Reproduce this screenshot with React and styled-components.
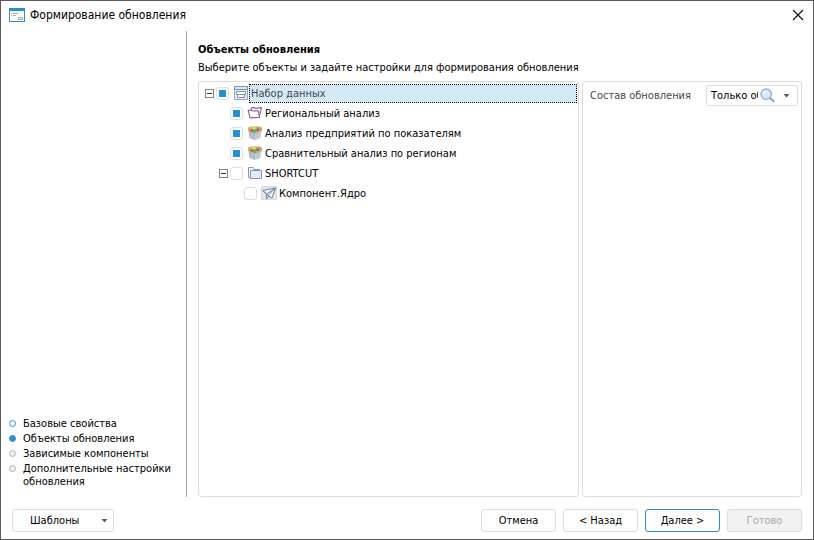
import React, { useState } from 'react'
import styled, { createGlobalStyle } from 'styled-components'


const GlobalStyle = createGlobalStyle`
*, *::before, *::after {
    box-sizing: border-box;
}

body {
    margin: 0;
    background: #fff;
    color: #000;
    font: 11px/13px "DejaVu Sans Condensed", "DejaVu Sans", sans-serif;
}

button, select {
    font: inherit;
    color: inherit;
}
`;

const Window = styled.div`
display: flex;
flex-direction: column;
min-height: 100vh;
border: 1px solid #5a5a5c;
background: #fff;
`

const TitleBar = styled.header`
display: flex;
align-items: center;
gap: 5px;
height: 30px;
padding: 0 7px 2px 8px;
`

const WindowTitle = styled.h1`
flex: 1;
margin: 0;
font-size: 12px;
font-weight: normal;
line-height: 16px;
`

const CloseButton = styled.button`
display: flex;
padding: 2px;
border: none;
background: none;
cursor: pointer;
`

const Body = styled.div`
display: flex;
flex: 1;
`

const Sidebar = styled.nav`
display: flex;
flex-direction: column;
justify-content: flex-end;
width: 186px;
padding: 0 10px 9px 8px;
border-right: 1px solid #a0a0a0;
`

const Steps = styled.ol`
display: flex;
flex-direction: column;
gap: 2px;
margin: 0;
padding: 0;
list-style: none;
`

const stepColors = {
    done: ['#2b90cd', '#fff'],
    current: ['#2b90cd', '#2b90cd'],
    pending: ['#b4b4b4', '#eee'],
}

const Step = styled.li`
display: flex;
gap: 7px;

&::before {
    content: "";
    flex: none;
    width: 7px;
    height: 7px;
    margin-top: 3px;
    border: 1px solid ${({ $state }) => stepColors[$state][0]};
    border-radius: 50%;
    background: ${({ $state }) => stepColors[$state][1]};
}
`

const Content = styled.main`
display: flex;
flex: 1;
flex-direction: column;
min-width: 0;
padding: 11px 11px 0;
`

const Heading = styled.h2`
margin: 0 0 2px;
font-size: 11px;
line-height: 15px;
`

const Hint = styled.p`
margin: 0 0 5px;
line-height: 17px;
`

const Panels = styled.div`
display: flex;
flex: 1;
gap: 3px;
`

const Panel = styled.section`
flex: ${({ $width }) => ($width ? `0 0 ${$width}` : '1')};
min-width: 0;
padding: ${({ $width }) => ($width ? '3px' : '1px')};
border: 1px solid #dcdcdc;
border-radius: 3px;
`

const Tree = styled.ul`
margin: 0;
padding: 0;
list-style: none;
`

const Row = styled.div`
display: flex;
align-items: center;
height: 20px;
padding-left: ${({ $level }) => 5 + $level * 14}px;
`

const Expander = styled.button`
display: flex;
width: 11px;
padding: 0;
border: none;
background: none;
`

const Spacer = styled.span`
width: ${({ $width }) => $width};
`

const CheckFrame = styled.span`
display: flex;
flex: none;
width: 13px;
height: 13px;
margin-right: 4px;
border: 1px solid #dedede;
border-radius: 3px;
`

const CheckBox = styled.input`
appearance: none;
width: 11px;
height: 11px;
margin: 0;
border: 2px solid transparent;

&:checked {
    background: #2490ce padding-box;
}
`

const RowLabel = styled.label`
flex: 1;
height: 19px;
border: 1px dotted ${({ $selected }) => ($selected ? '#000' : 'transparent')};
padding-left: 1px;
line-height: 17px;
background: ${({ $selected }) => ($selected ? '#d5e8f6' : 'transparent')};
color: ${({ $selected }) => ($selected ? '#46484c' : '#000')};
`

const Setting = styled.div`
display: flex;
align-items: center;
justify-content: space-between;
padding-left: 4px;
color: #45484f;
`

const ComboBox = styled.span`
display: flex;
align-items: center;
width: 92px;
height: 21px;
padding: 0 7px 0 4px;
border: 1px solid #dcdcdc;
border-radius: 3px;
color: #000;
`

const Select = styled.select`
appearance: none;
flex: 1;
min-width: 0;
margin-right: 2px;
padding: 0;
border: none;
outline: none;
background: none;
text-overflow: clip;
`

const Footer = styled.footer`
display: flex;
gap: 7px;
padding: 12px 11px 7px;
`

const Button = styled.button`
width: 75px;
height: 23px;
padding: 0;
border: 1px solid ${({ $primary }) => ($primary ? '#2b8fcd' : '#dcdcdc')};
border-radius: 3px;
background: #fff;

&:disabled {
    background: #f2f2f2;
    color: #a9a9ab;
}
`

const MenuButton = styled(Button)`
display: flex;
align-items: center;
justify-content: space-between;
width: 102px;
margin-right: auto;
padding: 0 5px 0 17px;
`

const AppIcon = () => (
    <svg width="16" height="14" viewBox="0 0 16 14" shapeRendering="crispEdges">
        <path d="M0 0h16v14H0z" fill="#2b8fcd" />
        <path d="M1 3h14v10H1z" fill="#fff" />
        <path d="M2 5h1v1H2zM4 5h5v1H4zM2 7h1v1H2zM4 7h3v1H4z" fill="#aaa" />
        <path d="M9.500 9.500h4v2h-4z" fill="none" stroke="#aaa" />
    </svg>
)

const CloseIcon = () => (
    <svg width="12" height="12" viewBox="0 0 12 12" fill="none" stroke="#111" strokeWidth="1.200">
        <path d="M1 1l10 10M11 1L1 11" />
    </svg>
)

const MinusIcon = () => (
    <svg width="9" height="9" viewBox="0 0 9 9" fill="none" shapeRendering="crispEdges">
        <path d="M.5.5h8v8h-8z" stroke="#858585" />
        <path d="M2 4.500h5" stroke="#333" />
    </svg>
)

const ArrowIcon = () => (
    <svg width="7" height="4" viewBox="0 0 7 4">
        <path d="M.5 0h6L3.500 3.500z" fill="#5c5c5c" />
    </svg>
)

const SearchIcon = () => (
    <svg width="15" height="15" viewBox="0 0 15 15" fill="none">
        <path d="M10 10l3.500 3.300" stroke="#8b9fc4" strokeWidth="2" strokeLinecap="round" />
        <circle cx="6.200" cy="6.200" r="5.200" fill="#d6e9fb" stroke="#8eacd3" strokeWidth="1.300" />
        <path d="M3.500 6a3 3 0 0 1 3-2.800" stroke="#fff" strokeWidth="1.200" />
    </svg>
)

const icons = {
    archive: (
        <g stroke="#7e90b0">
            <path d="M1.500 1.500h13v13h-13z" fill="#e6eef7" stroke="#94a4c2" />
            <path d="M1.500 1.500h13v3h-13z" fill="#dce9f5" />
            <path d="M4.500 9.500h7v3h-7z" fill="#fff" />
            <path d="M3.500 6.500h9v3h-9z" fill="#fff" />
        </g>
    ),
    folders: (
        <g fill="#fff" stroke="#8b6596" strokeWidth="1.200" strokeLinejoin="round">
            <path d="M5 9L4.300 3.200 7 2.400l1 .9 6.500-.6-1.800 7.500z" />
            <path d="M1.300 5.300l3-.3.800 1 6.200-.2 1.200 6.700-9.500.3z" />
        </g>
    ),
    cube: (
        <g>
            <path d="M1.200 4L8 6v9l-5.500-2z" fill="#aeb5be" />
            <path d="M14.800 4L8 6v9l5.500-2z" fill="#cdd2d8" />
            <path d="M4.200 7.500v6M6 8v6.200" stroke="#c6ccd3" strokeWidth=".8" />
            <path d="M10 8v6M12 7.500v6" stroke="#b4bbc4" strokeWidth=".8" />
            <path d="M1 2.800l4-1.300h6l4 1.300v3L12 7.500 8 8.500 4 7.500 1 5.800z" fill="#93b9a0" />
            <path d="M1 2.800l3-1 2 1-1.500 2L1 5z" fill="#f0a836" />
            <path d="M5 1.500h4L8.500 4l-3 .2z" fill="#e9dc5c" />
            <path d="M10 1.500h2l3 1.300v2l-3-1z" fill="#ec9a3c" />
            <path d="M3.500 4.500h3v2.300l-3-.6z" fill="#d8432e" />
            <path d="M9.500 3.500h2.500v2.500H9.500z" fill="#da4a36" />
            <path d="M6.800 4.500h2.200V8H6.800z" fill="#5fae78" />
        </g>
    ),
    folder: (
        <g stroke="#8494b4" strokeLinejoin="round">
            <path d="M1.500 12.500v-10h4.500l1 2h5.500v2" fill="#eef4fb" />
            <path d="M1.500 12.500l2 1" />
            <path d="M3.500 5.500h11v8h-11z" fill="#e2ebf6" />
        </g>
    ),
    component: (
        <g>
            <path d="M.5 1.500h15v13H.5z" fill="#e1e8f0" stroke="#d0d8e0" />
            <path d="M1.800 5.500L14.500 3 11 13 7 10.500z" fill="#f9fcff" stroke="#6d83a2" strokeLinejoin="round" />
            <path d="M14.500 3L5.500 9v5L8 11" fill="none" stroke="#6d83a2" strokeLinejoin="round" />
            <path d="M1.800 5.500L5.500 9M14 3.500L7 10.500" fill="none" stroke="#6d83a2" />
        </g>
    ),
}

const NodeIcon = ({ name }) => (
    <svg width="16" height="16" viewBox="0 0 16 16">{icons[name]}</svg>
)

const steps = [
    { title: 'Базовые свойства', state: 'done' },
    { title: 'Объекты обновления', state: 'current' },
    { title: 'Зависимые компоненты', state: 'pending' },
    { title: 'Дополнительные настройки обновления', state: 'pending' },
]

const nodes = [
    { id: 'dataset', title: 'Набор данных', level: 0, icon: 'archive', checked: true, expander: true },
    { id: 'regional', title: 'Региональный анализ', level: 1, icon: 'folders', checked: true },
    { id: 'companies', title: 'Анализ предприятий по показателям', level: 1, icon: 'cube', checked: true },
    { id: 'compare', title: 'Сравнительный анализ по регионам', level: 1, icon: 'cube', checked: true },
    { id: 'shortcut', title: 'SHORTCUT', level: 1, icon: 'folder', checked: false, expander: true },
    { id: 'core', title: 'Компонент.Ядро', level: 2, icon: 'component', checked: false },
]

const TreeNode = ({ node, selected, onSelect }) => (
    <li>
        <Row $level={node.level}>
            {node.expander ? <Expander aria-label="Свернуть"><MinusIcon /></Expander> : <Spacer $width="11px" />}
            <CheckFrame>
                <CheckBox type="checkbox" id={node.id} defaultChecked={node.checked} onFocus={onSelect} />
            </CheckFrame>
            <NodeIcon name={node.icon} />
            <RowLabel htmlFor={node.id} $selected={selected}>{node.title}</RowLabel>
        </Row>
    </li>
)


const App = () => {

    const [selected, setSelected] = useState('dataset');

    return (
        <>
            <GlobalStyle />
            <Window>
                <TitleBar>
                    <AppIcon />
                    <WindowTitle>Формирование обновления</WindowTitle>
                    <CloseButton aria-label="Закрыть"><CloseIcon /></CloseButton>
                </TitleBar>

                <Body>
                    <Sidebar>
                        <Steps>
                            {steps.map(step => (
                                <Step key={step.title} $state={step.state}>{step.title}</Step>
                            ))}
                        </Steps>
                    </Sidebar>

                    <Content>
                        <Heading>Объекты обновления</Heading>
                        <Hint>Выберите объекты и задайте настройки для формирования обновления</Hint>
                        <Panels>
                            <Panel>
                                <Tree>
                                    {nodes.map(node => (
                                        <TreeNode
                                            key={node.id}
                                            node={node}
                                            selected={node.id === selected}
                                            onSelect={() => setSelected(node.id)}
                                        />
                                    ))}
                                </Tree>
                            </Panel>
                            <Panel $width="220px">
                                <Setting>
                                    <label htmlFor="scope">Состав обновления</label>
                                    <ComboBox>
                                        <Select id="scope">
                                            <option>Только объекты</option>
                                        </Select>
                                        <SearchIcon />
                                        <Spacer $width="8px" />
                                        <ArrowIcon />
                                    </ComboBox>
                                </Setting>
                            </Panel>
                        </Panels>
                    </Content>
                </Body>

                <Footer>
                    <MenuButton>Шаблоны <ArrowIcon /></MenuButton>
                    <Button>Отмена</Button>
                    <Button>&lt; Назад</Button>
                    <Button $primary>Далее &gt;</Button>
                    <Button disabled>Готово</Button>
                </Footer>
            </Window>
        </>
    )
}
export default App
